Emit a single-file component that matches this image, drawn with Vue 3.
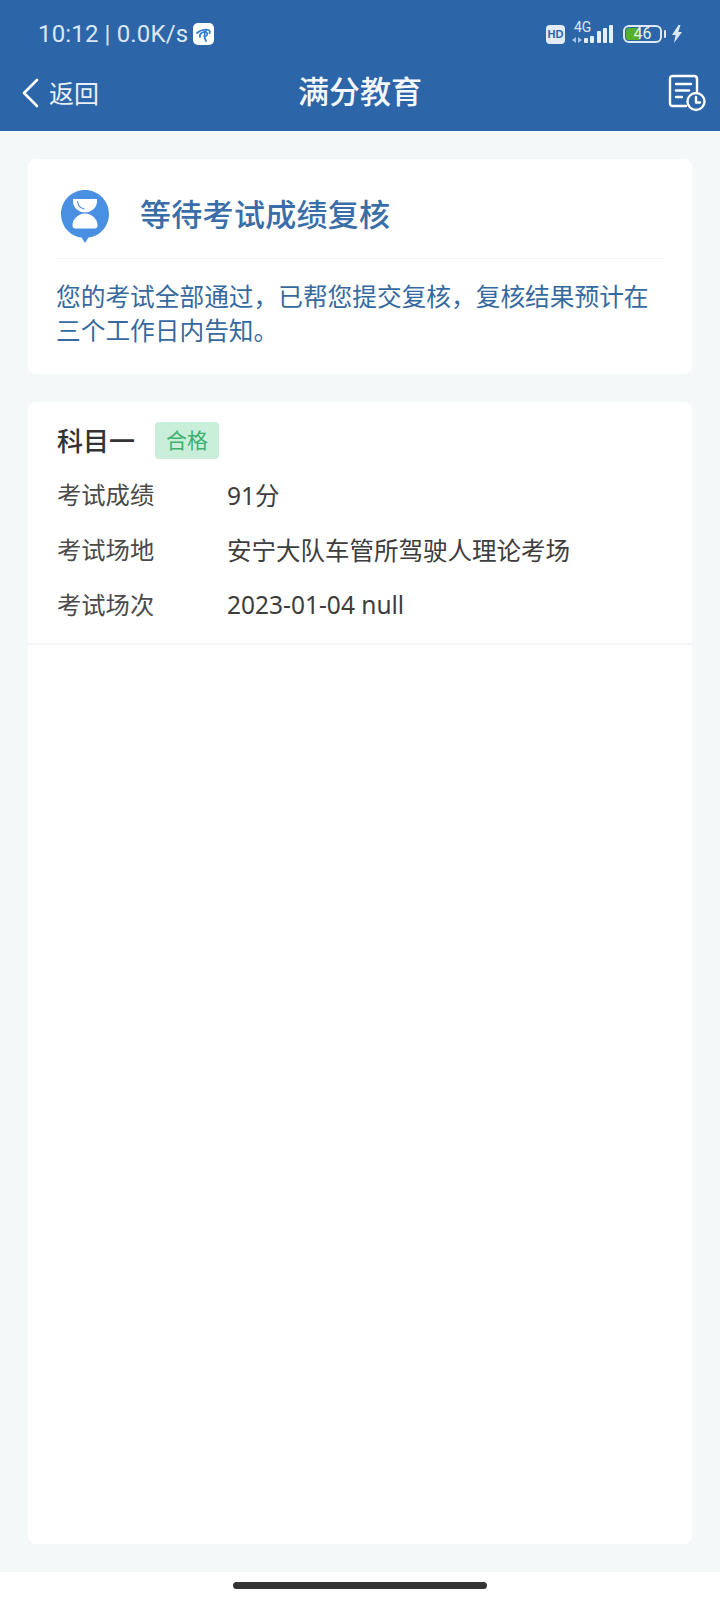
<script setup>
const rows = [
  { label: '考试成绩', value: '91分' },
  { label: '考试场地', value: '安宁大队车管所驾驶人理论考场' },
  { label: '考试场次', value: '2023-01-04 null' }
]
const bars = [5, 7, 12, 15, 18]
</script>

<template>
  <div class="page">
    <header class="header">
      <div class="status-bar">
        <div class="status-left">
          <span class="clock">10:12 | 0.0K/s</span>
          <span class="carrier">
            <svg width="17" height="17" viewBox="0 0 17 17" fill="none" stroke="#2f80dc" stroke-width="1.800" stroke-linecap="round">
              <path d="M2 7C5 4 10 3 13.500 4C15 4.500 15 6 14.500 7" />
              <path d="M5 11C4 7 9 5 11.500 6.500C13.500 8 12 10 9.500 10.500" />
              <path d="M11 4.500C9 7 9 12 11 15" />
            </svg>
          </span>
        </div>
        <div class="status-right">
          <span class="hd">HD</span>
          <div class="net">
            <span class="net-label">4G</span>
            <svg width="10" height="6" viewBox="0 0 10 6" fill="#a9c3e0">
              <path d="M4 0V6L0 3Z" />
              <path d="M6 0V6L10 3Z" />
            </svg>
          </div>
          <div class="signal">
            <span v-for="h in bars" :key="h" class="bar" :style="{ height: h + 'px' }"></span>
          </div>
          <div class="battery">
            <div class="battery-body">
              <span class="battery-fill"></span>
              <span class="battery-num">46</span>
            </div>
            <span class="battery-cap"></span>
          </div>
          <svg width="10" height="18" viewBox="0 0 10 18" fill="#dfe9f5">
            <path d="M6.500 0L0 10H3.600L2 18L10 7H6.200L8.500 0Z" />
          </svg>
        </div>
      </div>
      <div class="nav">
        <div class="back">
          <svg width="18" height="30" viewBox="0 0 18 30" fill="none" stroke="#fff" stroke-width="2.600" stroke-linecap="round" stroke-linejoin="round">
            <path d="M16 2L3 15L16 28" />
          </svg>
          <span class="back-text">返回</span>
        </div>
        <h1 class="title">满分教育</h1>
        <svg class="record" width="38" height="38" viewBox="0 0 38 38" fill="none" stroke="#fff" stroke-width="2.400" stroke-linecap="round" stroke-linejoin="round">
          <path d="M18 32H5C3 32 2 31 2 29V5C2 3 3 2 5 2H26C28 2 29 3 29 5V17" />
          <path d="M8 10H23" />
          <path d="M8 16.500H21" />
          <path d="M8 23H14" />
          <circle cx="28" cy="27.500" r="8.500" />
          <path d="M28 23V28.500H32" />
        </svg>
      </div>
    </header>

    <main class="content">
      <section class="card notice">
        <div class="notice-head">
          <svg class="hourglass" width="50" height="54" viewBox="0 0 50 54">
            <path d="M25 1C11.700 1 1 11.700 1 25C1 37.500 10.500 47.500 21.500 48.600L25 54L28.500 48.600C39.500 47.500 49 37.500 49 25C49 11.700 38.300 1 25 1Z" fill="#4a90e2" />
            <path d="M13 10H37V12C37 18 33 21.500 28 23.200H22C17 21.500 13 18 13 12Z" fill="#fff" />
            <path d="M25 24.600C32 25 37.500 30 37.500 36.500C37.500 38.500 36.500 39.500 34.500 39.500H15.500C13.500 39.500 12.500 38.500 12.500 36.500C12.500 30 18 25 25 24.600Z" fill="#fff" />
            <path d="M17.500 12.500C18 16.500 20.500 19 24 20" fill="none" stroke="#4a90e2" stroke-width="1.200" stroke-linecap="round" />
          </svg>
          <h2 class="notice-title">等待考试成绩复核</h2>
        </div>
        <p class="notice-text">您的考试全部通过，已帮您提交复核，复核结果预计在三个工作日内告知。</p>
      </section>

      <section class="card detail">
        <div class="subject">
          <div class="subject-head">
            <span class="subject-name">科目一</span>
            <span class="tag">合格</span>
          </div>
          <div v-for="row in rows" :key="row.label" class="row">
            <span class="row-label">{{ row.label }}</span>
            <span class="row-value">{{ row.value }}</span>
          </div>
        </div>
      </section>
    </main>

    <footer class="home-bar">
      <span class="home-indicator"></span>
    </footer>
  </div>
</template>

<style>
html, body {
  margin: 0;
  background: #fff;
}
</style>

<style scoped>
.page {
  width: 720px;
  height: 1600px;
  display: flex;
  flex-direction: column;
  background: #f4f8f9;
  font-family: "Noto Sans CJK SC", "Noto Sans", sans-serif;
}

.header {
  height: 131px;
  background: #2d65a9;
  color: #fff;
  flex: none;
}

.status-bar {
  height: 68px;
  display: flex;
  justify-content: space-between;
  align-items: center;
  padding: 0 38px;
}

.status-left {
  display: flex;
  align-items: center;
  gap: 5px;
}

.clock {
  font-family: "Roboto", "Noto Sans", sans-serif;
  font-size: 24px;
  letter-spacing: 0.15px;
  color: #dbe7f4;
}

.carrier {
  width: 21px;
  height: 22px;
  background: #fff;
  border-radius: 5px;
  display: flex;
  align-items: center;
  justify-content: center;
}

.status-right {
  display: flex;
  align-items: center;
}

.hd {
  width: 19px;
  height: 19px;
  border-radius: 4px;
  background: #e3ecf6;
  color: #2d65a9;
  font-family: "Liberation Sans", sans-serif;
  font-size: 11px;
  font-weight: 700;
  display: flex;
  align-items: center;
  justify-content: center;
  margin-right: 7px;
}

.net {
  width: 12px;
  display: flex;
  flex-direction: column;
  gap: 4px;
  margin-top: -3px;
}

.net-label {
  font-family: "Roboto", sans-serif;
  font-size: 14px;
  line-height: 11px;
  margin-left: 2px;
  white-space: nowrap;
  color: #dbe7f4;
}

.signal {
  display: flex;
  align-items: flex-end;
  gap: 2.25px;
  height: 18px;
  margin-right: 10px;
}

.bar {
  width: 4px;
  background: #e6eef7;
  border-radius: 1px;
}

.battery {
  display: flex;
  align-items: center;
  gap: 2px;
  margin-right: 6px;
}

.battery-body {
  position: relative;
  width: 35px;
  height: 14px;
  border: 2px solid #dfe9f5;
  border-radius: 6px;
  display: flex;
  align-items: center;
  justify-content: center;
}

.battery-fill {
  position: absolute;
  left: 1px;
  top: 1px;
  bottom: 1px;
  width: 14px;
  background: #54b02c;
  border-radius: 3px 0 0 3px;
}

.battery-num {
  position: relative;
  font-family: "Roboto", sans-serif;
  font-size: 16px;
  line-height: 14px;
  color: #e8f3e0;
}

.battery-cap {
  width: 2px;
  height: 8px;
  background: #dfe9f5;
  border-radius: 1px;
}

.nav {
  height: 63px;
  display: flex;
  align-items: center;
  justify-content: space-between;
  padding: 0 14px 13px 21px;
  box-sizing: border-box;
  position: relative;
}

.back {
  display: flex;
  align-items: center;
  gap: 10px;
}

.back-text {
  font-size: 25px;
  color: #e8eff7;
  line-height: 30px;
  margin-top: -3px;
}

.title {
  position: absolute;
  left: 0;
  right: 0;
  top: 0;
  margin: 0;
  text-align: center;
  font-size: 31px;
  font-weight: 500;
  line-height: 44px;
  color: #f4f8fc;
}

.content {
  flex: 1;
  display: flex;
  flex-direction: column;
  gap: 28px;
  padding: 28px;
  min-height: 0;
}

.card {
  background: #fff;
  border-radius: 8px;
}

.notice {
  height: 215px;
  box-sizing: border-box;
  padding: 0 29px;
}

.notice-head {
  height: 99px;
  display: flex;
  align-items: center;
  gap: 30px;
  padding-left: 3px;
  border-bottom: 1px solid #f1f3f4;
}

.hourglass {
  flex: none;
  margin-top: 14px;
}

.notice-title {
  margin: 8px 0 0;
  font-size: 31px;
  letter-spacing: 0.3px;
  font-weight: 500;
  line-height: 40px;
  color: #3a6ea8;
}

.notice-text {
  margin: 19px 0 0 -1px;
  font-size: 24.7px;
  line-height: 34px;
  color: #36699f;
}

.detail {
  flex: 1;
}

.subject {
  height: 243px;
  box-sizing: border-box;
  padding: 20px 29px 0;
  border-bottom: 2px solid #f4f6f7;
}

.subject-head {
  display: flex;
  align-items: center;
  gap: 20px;
  height: 37px;
  margin-bottom: 7px;
}

.subject-name {
  font-size: 26px;
  font-weight: 500;
  line-height: 34px;
  margin-bottom: 2px;
  color: #333;
}

.tag {
  width: 64px;
  height: 37px;
  background: #c9eed9;
  border-radius: 4px;
  color: #3fb070;
  font-size: 21px;
  line-height: 34px;
  text-align: center;
}

.row {
  display: flex;
  align-items: center;
  height: 55px;
}

.row-label {
  width: 170px;
  flex: none;
  font-size: 24.3px;
  color: #4a4a4a;
}

.row-value {
  font-family: "Noto Sans", "Noto Sans CJK SC", sans-serif;
  font-size: 24.5px;
  margin-top: 2px;
  color: #3d3d3d;
}

.home-bar {
  height: 28px;
  flex: none;
  background: #fff;
  display: flex;
  justify-content: center;
  padding-top: 10px;
  box-sizing: border-box;
}

.home-indicator {
  width: 254px;
  height: 7px;
  background: #333;
  border-radius: 4px;
}
</style>
